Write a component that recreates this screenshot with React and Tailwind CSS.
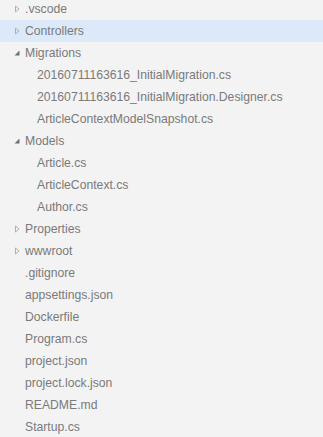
import React from "react";

const TREE = [
  { name: ".vscode", type: "folder" },
  { name: "Controllers", type: "folder", selected: true },
  { name: "Migrations", type: "folder", open: true },
  { name: "20160711163616_InitialMigration.cs", depth: 1 },
  { name: "20160711163616_InitialMigration.Designer.cs", depth: 1 },
  { name: "ArticleContextModelSnapshot.cs", depth: 1 },
  { name: "Models", type: "folder", open: true },
  { name: "Article.cs", depth: 1 },
  { name: "ArticleContext.cs", depth: 1 },
  { name: "Author.cs", depth: 1 },
  { name: "Properties", type: "folder" },
  { name: "wwwroot", type: "folder" },
  { name: ".gitignore" },
  { name: "appsettings.json" },
  { name: "Dockerfile" },
  { name: "Program.cs" },
  { name: "project.json" },
  { name: "project.lock.json" },
  { name: "README.md" },
  { name: "Startup.cs" },
];

function Twisty({ open }) {
  if (open) {
    return (
      <svg width="8" height="8" viewBox="0 0 8 8" className="shrink-0">
        <path d="M6.5 1.5 L6.5 6.5 L1.5 6.5 Z" fill="#707070" />
      </svg>
    );
  }
  return (
    <svg width="8" height="8" viewBox="0 0 8 8" className="shrink-0">
      <path d="M2.5 1 L6 4 L2.5 7 Z" fill="none" stroke="#b0b0b0" strokeWidth="1" />
    </svg>
  );
}

export default function App() {
  return (
    <div
      className="w-[323px] h-[437px] overflow-hidden bg-[#f3f3f3] text-[12.2px] text-[#7a7a7a]"
      style={{ fontFamily: '"Liberation Sans", Arial, sans-serif' }}
    >
      <div className="-mt-[2px]">
        {TREE.map((item) => (
          <div
            key={item.name}
            className={
              "flex h-[22px] items-center whitespace-nowrap " +
              (item.selected ? "bg-[#dce9f9]" : "")
            }
          >
            {item.type === "folder" ? (
              <div className="flex items-center pl-[13px]">
                <Twisty open={item.open} />
                <span className="pl-[4px]">{item.name}</span>
              </div>
            ) : (
              <span className={item.depth ? "pl-[37px]" : "pl-[25px]"}>{item.name}</span>
            )}
          </div>
        ))}
      </div>
    </div>
  );
}
